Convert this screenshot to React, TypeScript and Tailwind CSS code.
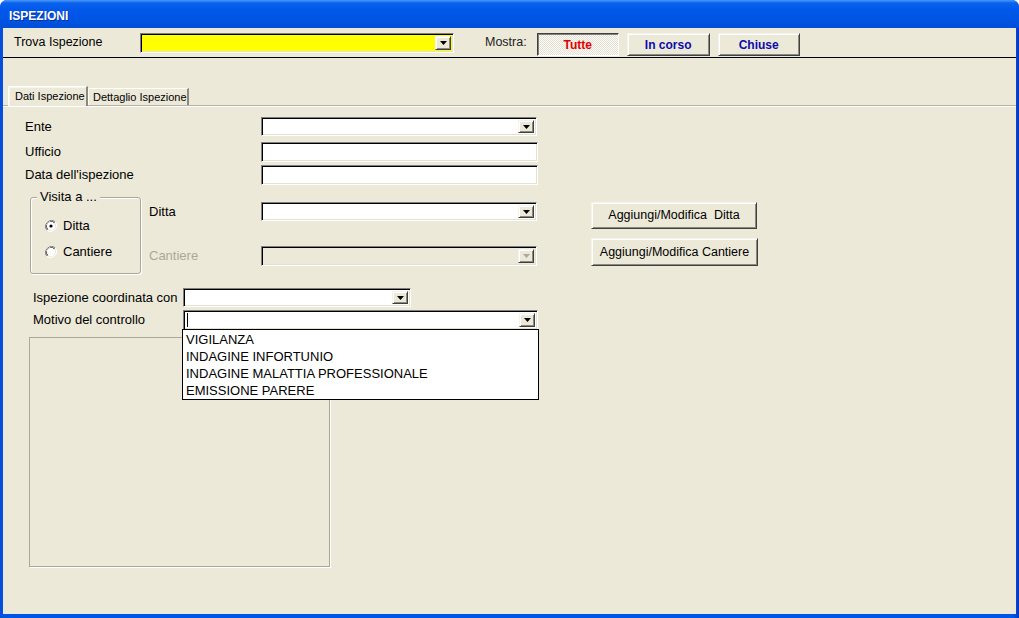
import React from "react";

const sunken =
    "border border-t-[#7f7f7f] border-l-[#7f7f7f] border-b-white border-r-white shadow-[inset_1px_1px_0_#000,inset_-1px_-1px_0_#e4e1d0]";
const raised =
    "border border-t-[#f4f3ee] border-l-[#f4f3ee] border-b-[#404040] border-r-[#404040] shadow-[inset_1px_1px_0_#fff,inset_-1px_-1px_0_#8c8a80]";

function Arrow({ disabled }: { disabled?: boolean }) {
    return (
        <div className={`w-[16px] bg-[#ECE9D8] flex items-center justify-center ${raised}`}>
            <svg width="7" height="4" viewBox="0 0 7 4">
                <polygon points="0,0 7,0 3.5,4" fill={disabled ? "#aca899" : "#000"} />
            </svg>
        </div>
    );
}

function Combo({
    className,
    bg = "bg-white",
    disabled,
    caret,
    children,
}: {
    className: string;
    bg?: string;
    disabled?: boolean;
    caret?: boolean;
    children?: React.ReactNode;
}) {
    return (
        <div className={`relative flex p-[2px] ${bg} ${sunken} ${className}`}>
            <div className="flex-1 flex items-center pl-[1px]">
                {caret && <div className="w-[1px] h-[14px] bg-black" />}
            </div>
            <Arrow disabled={disabled} />
            {children}
        </div>
    );
}

function Field({ className }: { className: string }) {
    return <div className={`bg-white ${sunken} ${className}`} />;
}

function Radio({ checked }: { checked?: boolean }) {
    return (
        <svg width="12" height="12" viewBox="0 0 12 12">
            <path d="M10.2 1.8 A6 6 0 0 0 1.8 10.2" fill="none" stroke="#808080" strokeWidth="1" />
            <path d="M9.4 2.6 A4.9 4.9 0 0 0 2.6 9.4" fill="none" stroke="#000" strokeWidth="1" />
            <path d="M1.8 10.2 A6 6 0 0 0 10.2 1.8" fill="none" stroke="#fff" strokeWidth="1" />
            <circle cx="6" cy="6" r="4.2" fill="#fff" />
            {checked && <circle cx="6" cy="6" r="1.6" fill="#000" />}
        </svg>
    );
}

const items = ["VIGILANZA", "INDAGINE INFORTUNIO", "INDAGINE MALATTIA PROFESSIONALE", "EMISSIONE PARERE"];

export default function App() {
    return (
        <div className="w-[1019px] h-[618px] flex flex-col rounded-t-[7px] overflow-hidden bg-[linear-gradient(to_right,#0a4ad8,#0055e5_3px,#0055e5_1014px,#0636b8)] font-['Liberation_Sans',Arial,sans-serif] text-[12.5px] text-black">
            {/* title bar */}
            <div className="h-[28px] shrink-0 flex items-center pl-[9px] pt-[3px] bg-[linear-gradient(to_bottom,#4b9af9_0px,#0b62ef_3px,#0058ea_10px,#0054e3_20px,#024ed8_28px)]">
                <span className="text-white font-bold text-[12px] [text-shadow:1px_1px_0_#0a2f9a]">ISPEZIONI</span>
            </div>

            <div className="flex-1 mx-[3px] mb-[4px] bg-[#ECE9D8] flex flex-col">
                {/* toolbar */}
                <div className="h-[30px] shrink-0 flex items-start pt-[5px] border-b border-black">
                    <span className="w-[137px] pl-[11px] leading-[19px]">Trova Ispezione</span>
                    <Combo className="w-[314px] h-[20px]" bg="bg-[#ffff00]" />
                    <span className="ml-[31px] leading-[19px] text-[#222]">Mostra:</span>
                    <button className="ml-[10px] w-[82px] h-[23px] text-[12px] font-bold text-[#e00000] border border-t-[#404040] border-l-[#404040] border-b-white border-r-white shadow-[inset_1px_1px_0_#808080] bg-[repeating-conic-gradient(#fbfaf6_0_25%,#e4e1d4_0_50%)] bg-[length:2px_2px] pt-[1px]">
                        Tutte
                    </button>
                    <button className={`ml-[8px] w-[83px] h-[23px] text-[12px] font-bold text-[#0b0bb0] bg-[#ECE9D8] ${raised}`}>
                        In corso
                    </button>
                    <button className={`ml-[8px] w-[82px] h-[23px] text-[12px] font-bold text-[#0b0bb0] bg-[#ECE9D8] ${raised}`}>
                        Chiuse
                    </button>
                </div>

                {/* tabs */}
                <div className="mt-[28px] flex items-end pl-[5px] border-b border-[#b5b2a5] shadow-[0_1px_0_#fff] text-[11px]">
                    <div className="h-[20px] w-[80px] pl-[6px] flex items-center border-t border-l border-white border-r-2 border-r-[#8c8a80] rounded-tl-[2px] shadow-[inset_1px_1px_0_#f6f5f0] -mb-[1px] bg-[#ECE9D8] relative">
                        Dati Ispezione
                    </div>
                    <div className="h-[17px] w-[101px] pl-[4px] flex items-center border-t border-l border-white border-r-2 border-r-[#8c8a80] rounded-tl-[2px]">
                        Dettaglio Ispezione
                    </div>
                </div>

                {/* form */}
                <div className="flex flex-col text-[13px]">
                    <div className="mt-[11px] flex items-center h-[19px]">
                        <span className="w-[258px] pl-[22px]">Ente</span>
                        <Combo className="w-[276px] h-[19px]" />
                    </div>
                    <div className="mt-[6px] flex items-center h-[20px]">
                        <span className="w-[258px] pl-[22px]">Ufficio</span>
                        <Field className="w-[277px] h-[20px]" />
                    </div>
                    <div className="mt-[3px] flex items-center h-[19px]">
                        <span className="w-[258px] pl-[22px]">Data dell'ispezione</span>
                        <Field className="w-[277px] h-[20px]" />
                    </div>

                    <div className="mt-[13px] flex items-start pl-[27px]">
                        <div className="relative w-[111px] h-[77px] border border-[#aca899] rounded-[3px] shadow-[inset_1px_1px_0_#fff,1px_1px_0_#fff]">
                            <span className="absolute -top-[10px] left-[6px] px-[3px] bg-[#ECE9D8] leading-[17px]">Visita a ...</span>
                            <div className="pl-[14px] pt-[21px] flex flex-col gap-[12px]">
                                <div className="flex items-center gap-[6px] h-[14px]">
                                    <Radio checked />
                                    <span>Ditta</span>
                                </div>
                                <div className="flex items-center gap-[6px] h-[14px]">
                                    <Radio />
                                    <span>Cantiere</span>
                                </div>
                            </div>
                        </div>
                        <div className="ml-[8px] mt-[5px] flex flex-col">
                            <div className="flex items-center h-[19px]">
                                <span className="w-[112px]">Ditta</span>
                                <Combo className="w-[276px] h-[19px]" />
                            </div>
                            <div className="mt-[25px] flex items-center h-[20px]">
                                <span className="w-[112px] text-[#aca899]">Cantiere</span>
                                <Combo className="w-[276px] h-[20px]" bg="bg-[#ECE9D8]" disabled />
                            </div>
                        </div>
                        <div className="ml-[54px] mt-[5px] flex flex-col text-[12.5px]">
                            <button className={`w-[166px] h-[27px] bg-[#ECE9D8] ${raised}`}>Aggiungi/Modifica&nbsp; Ditta</button>
                            <button className={`mt-[9px] w-[167px] h-[28px] bg-[#ECE9D8] ${raised}`}>Aggiungi/Modifica Cantiere</button>
                        </div>
                    </div>

                    <div className="mt-[14px] flex items-center h-[19px]">
                        <span className="w-[180px] pl-[30px]">Ispezione coordinata con</span>
                        <Combo className="w-[228px] h-[19px]" />
                    </div>
                    <div className="mt-[3px] flex items-center h-[20px]">
                        <span className="w-[180px] pl-[30px]">Motivo del controllo</span>
                        <Combo className="w-[355px] h-[20px] z-10" caret>
                            <div className="absolute top-full -left-[2px] -right-[2px] h-[71px] bg-white border border-black text-[13px] leading-[17px] pl-[3px] pt-[1px]">
                                {items.map((it) => (
                                    <div key={it}>{it}</div>
                                ))}
                            </div>
                        </Combo>
                    </div>

                    <div className="mt-[7px] ml-[26px] w-[301px] h-[230px] border border-[#aca899] shadow-[1px_1px_0_#fff]" />
                </div>
            </div>
        </div>
    );
}
